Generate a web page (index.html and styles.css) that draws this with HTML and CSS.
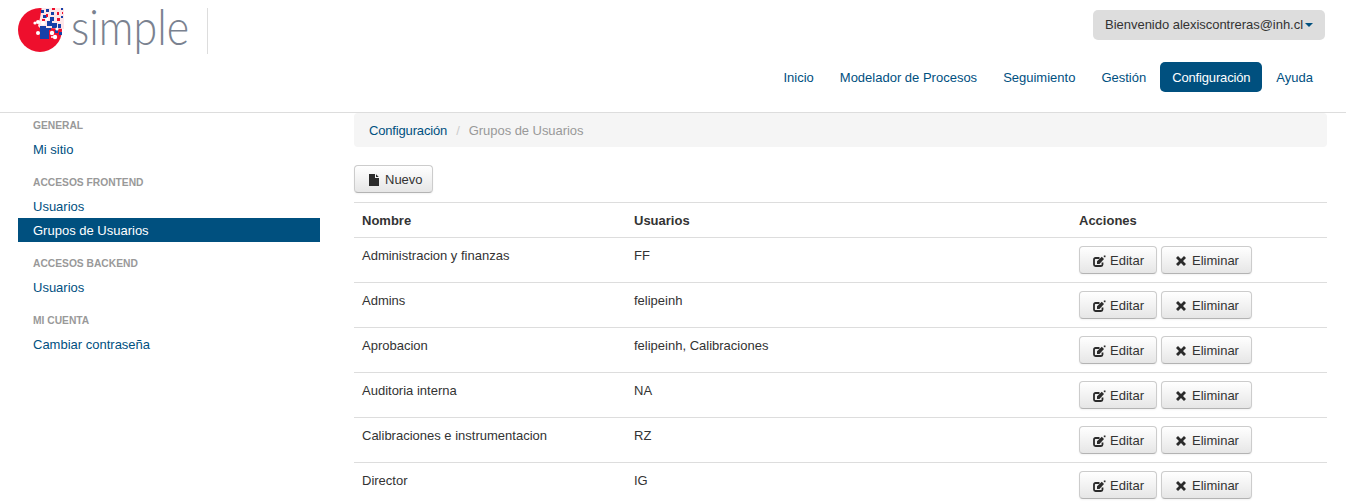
FILE: index.html
```html
<!DOCTYPE html>
<html lang="es">
<head>
<meta charset="utf-8">
<title>Grupos de Usuarios</title>
<link rel="stylesheet" href="styles.css">
</head>
<body>
<svg class="defs" width="0" height="0" aria-hidden="true">
  <symbol id="i-edit" viewBox="0 0 13 12">
    <path d="M6.500 3H2.500A1.500 1.500 0 0 0 1 4.500V9.500A1.500 1.500 0 0 0 2.500 11H8A1.500 1.500 0 0 0 9.500 9.500V7.500" fill="none" stroke="#2b2b2b" stroke-width="1.800"/>
    <path d="M4 9V6.300L8.800 1.800L11 4L6.500 9Z" fill="#2b2b2b"/>
    <rect x="10.800" y="0.500" width="1.700" height="1.700" fill="#2b2b2b"/>
  </symbol>
  <symbol id="i-x" viewBox="0 0 10 10">
    <path d="M2 0L5 3L8 0L10 2L7 5L10 8L8 10L5 7L2 10L0 8L3 5L0 2Z" fill="#2b2b2b"/>
  </symbol>
</svg>
<header class="header">
  <div class="brand">
    <svg class="logo-mark" width="46" height="46" viewBox="18 8 46 46" aria-hidden="true">
      <circle cx="40" cy="30" r="22" fill="#ee0f2d"/>
      <path d="M42 6 H66 V29 L50 28 L43 31 L38 26 L40 18 Z" fill="#fde6e9"/>
      <g fill="#1540a8">
        <rect x="40" y="30" width="9" height="9"/>
        <rect x="41" y="10" width="3" height="3"/><rect x="46" y="9" width="3" height="3"/>
        <rect x="51" y="12" width="3" height="3"/><rect x="61" y="8" width="2" height="2"/>
        <rect x="43" y="15" width="4" height="3"/><rect x="50" y="17" width="4" height="4"/>
        <rect x="47" y="21" width="5" height="5"/><rect x="52" y="23" width="5" height="5"/>
        <rect x="58" y="24" width="3" height="4"/><rect x="40" y="26" width="6" height="4"/>
        <rect x="59" y="32" width="3" height="3"/><rect x="61" y="16" width="2" height="2"/>
        <rect x="55" y="30" width="3" height="3"/><rect x="46" y="28" width="5" height="2"/>
      </g>
      <g fill="#ee0f2d">
        <rect x="52" y="8" width="3" height="2"/><rect x="57" y="12" width="2" height="3"/>
        <rect x="57" y="18" width="3" height="3"/><rect x="46" y="14" width="2" height="3"/>
        <rect x="42" y="19" width="3" height="2"/><rect x="62" y="12" width="1" height="2"/>
      </g>
      <g fill="#fff">
        <circle cx="35" cy="23" r="1.600"/><circle cx="38" cy="22" r="2"/><circle cx="43" cy="23" r="2"/>
        <circle cx="38" cy="33" r="2"/><circle cx="52" cy="33" r="2.200"/><circle cx="55" cy="37" r="2.200"/>
        <circle cx="57" cy="29" r="1.600"/><circle cx="47" cy="19" r="1.500"/><circle cx="52" cy="37" r="1"/>
      </g>
    </svg>
    <span class="logo-text">simple</span>
    <span class="logo-rule"></span>
  </div>
  <div class="header-right">
    <a class="user-btn" href="#">Bienvenido alexiscontreras@inh.cl<span class="caret"></span></a>
    <nav class="pills">
      <a class="pill" href="#">Inicio</a>
      <a class="pill" href="#">Modelador de Procesos</a>
      <a class="pill" href="#">Seguimiento</a>
      <a class="pill" href="#">Gestión</a>
      <a class="pill pill-active" href="#">Configuración</a>
      <a class="pill" href="#">Ayuda</a>
    </nav>
  </div>
</header>
<div class="layout">
  <aside class="sidebar">
    <div class="side-group">
      <div class="side-head">General</div>
      <a class="side-link" href="#">Mi sitio</a>
    </div>
    <div class="side-group">
      <div class="side-head">Accesos Frontend</div>
      <a class="side-link" href="#">Usuarios</a>
      <a class="side-link side-active" href="#">Grupos de Usuarios</a>
    </div>
    <div class="side-group">
      <div class="side-head">Accesos Backend</div>
      <a class="side-link" href="#">Usuarios</a>
    </div>
    <div class="side-group">
      <div class="side-head">Mi cuenta</div>
      <a class="side-link" href="#">Cambiar contraseña</a>
    </div>
  </aside>
  <main class="main">
    <div class="breadcrumb"><a class="crumb-link" href="#">Configuración</a><span class="sep">/</span><span class="current">Grupos de Usuarios</span></div>
    <a class="btn btn-new" href="#"><svg class="ico" width="10" height="12" viewBox="0 0 10 12" aria-hidden="true"><path d="M0 0H6V4H10V12H0Z M7 0.200 L9.800 3H7Z" fill="#2b2b2b"/></svg>Nuevo</a>
    <table class="grid">
      <colgroup><col class="col-a"><col class="col-b"><col></colgroup>
      <thead><tr><th>Nombre</th><th>Usuarios</th><th>Acciones</th></tr></thead>
      <tbody>
        <tr><td>Administracion y finanzas</td><td>FF</td><td class="acts"><a class="btn btn-edit" href="#"><svg class="ico-e" width="13" height="12" aria-hidden="true"><use href="#i-edit"/></svg>Editar</a><a class="btn btn-del" href="#"><svg class="ico-x" width="10" height="10" aria-hidden="true"><use href="#i-x"/></svg>Eliminar</a></td></tr>
        <tr><td>Admins</td><td>felipeinh</td><td class="acts"><a class="btn btn-edit" href="#"><svg class="ico-e" width="13" height="12" aria-hidden="true"><use href="#i-edit"/></svg>Editar</a><a class="btn btn-del" href="#"><svg class="ico-x" width="10" height="10" aria-hidden="true"><use href="#i-x"/></svg>Eliminar</a></td></tr>
        <tr><td>Aprobacion</td><td>felipeinh, Calibraciones</td><td class="acts"><a class="btn btn-edit" href="#"><svg class="ico-e" width="13" height="12" aria-hidden="true"><use href="#i-edit"/></svg>Editar</a><a class="btn btn-del" href="#"><svg class="ico-x" width="10" height="10" aria-hidden="true"><use href="#i-x"/></svg>Eliminar</a></td></tr>
        <tr><td>Auditoria interna</td><td>NA</td><td class="acts"><a class="btn btn-edit" href="#"><svg class="ico-e" width="13" height="12" aria-hidden="true"><use href="#i-edit"/></svg>Editar</a><a class="btn btn-del" href="#"><svg class="ico-x" width="10" height="10" aria-hidden="true"><use href="#i-x"/></svg>Eliminar</a></td></tr>
        <tr><td>Calibraciones e instrumentacion</td><td>RZ</td><td class="acts"><a class="btn btn-edit" href="#"><svg class="ico-e" width="13" height="12" aria-hidden="true"><use href="#i-edit"/></svg>Editar</a><a class="btn btn-del" href="#"><svg class="ico-x" width="10" height="10" aria-hidden="true"><use href="#i-x"/></svg>Eliminar</a></td></tr>
        <tr><td>Director</td><td>IG</td><td class="acts"><a class="btn btn-edit" href="#"><svg class="ico-e" width="13" height="12" aria-hidden="true"><use href="#i-edit"/></svg>Editar</a><a class="btn btn-del" href="#"><svg class="ico-x" width="10" height="10" aria-hidden="true"><use href="#i-x"/></svg>Eliminar</a></td></tr>
      </tbody>
    </table>
  </main>
</div>
</body>
</html>
```
FILE: styles.css
```css
html { overflow: hidden; height: 504px; }
body {
  margin: 0;
  font-family: "Liberation Sans", Arial, sans-serif;
  font-size: 13px;
  line-height: 20px;
  color: #333;
  background: #fff;
}
a { color: #00507f; text-decoration: none; }
.defs { display: block; height: 0; }

.header {
  height: 112px;
  border-bottom: 1px solid #ddd;
  display: flex;
  justify-content: space-between;
  padding: 0 21px 0 18px;
}
.brand { display: flex; align-items: flex-start; padding-top: 8px; }
.logo-mark { display: block; }
.logo-text {
  font-family: Lato, sans-serif;
  font-weight: 300;
  font-size: 43px;
  line-height: normal;
  color: #7a8290;
  margin: -11px 0 0 7px;
  width: 136px;
  transform: scaleY(1.14);
  transform-origin: top left;
}
.logo-rule { width: 1px; height: 46px; background: #ddd; }

.header-right { display: flex; flex-direction: column; align-items: flex-end; padding-top: 10px; }
.user-btn {
  display: flex;
  align-items: center;
  height: 30px;
  padding: 0 12px;
  background: #ddd;
  border-radius: 5px;
  color: #333;
  letter-spacing: -0.03px;
}
.caret {
  width: 0; height: 0;
  margin-left: 2px;
  border-left: 4px solid transparent;
  border-right: 4px solid transparent;
  border-top: 4px solid #00507f;
}
.pills { display: flex; gap: 2px; margin-top: 22px; }
.pill { display: block; height: 30px; line-height: 32px; padding: 0 12px; border-radius: 5px; }
.pill-active { background: #00507f; color: #fff; letter-spacing: -0.16px; }

.layout {
  display: grid;
  grid-template-columns: 302px 973px;
  column-gap: 34px;
  padding-left: 18px;
}
.side-group { margin-bottom: 9px; }
.side-head {
  height: 24px;
  line-height: 26px;
  padding-left: 15px;
  font-size: 10.25px;
  font-weight: bold;
  text-transform: uppercase;
  color: #999;
}
.side-link { display: block; height: 24px; line-height: 26px; padding-left: 15px; }
.side-active { background: #00507f; color: #fff; }

.breadcrumb {
  height: 34px;
  line-height: 36px;
  padding: 0 15px;
  background: #f5f5f5;
  border-radius: 4px;
  margin-bottom: 18px;
}
.crumb-link { letter-spacing: -0.16px; }
.sep { color: #ccc; padding: 0 9px; }
.current { color: #999; letter-spacing: -0.05px; }

.btn {
  display: inline-flex;
  align-items: center;
  box-sizing: border-box;
  height: 28px;
  padding-top: 2px;
  border: 1px solid #ccc;
  border-bottom-color: #b3b3b3;
  border-radius: 4px;
  background: linear-gradient(#fff, #e6e6e6);
  box-shadow: inset 0 1px 0 rgba(255,255,255,.2), 0 1px 2px rgba(0,0,0,.05);
  color: #333;
  vertical-align: top;
}
.btn-new { width: 79px; padding-left: 14px; }
.ico { margin-right: 6px; }
.btn-edit { width: 78px; padding-left: 13px; }
.ico-e { margin-right: 4px; }
.btn-del { width: 91px; padding-left: 14px; margin-left: 4px; }
.ico-x { margin-right: 6px; }

.grid {
  width: 100%;
  table-layout: fixed;
  border-collapse: separate;
  border-spacing: 0;
  margin-top: 9px;
}
.col-a { width: 272px; }
.col-b { width: 445px; }
.grid th, .grid td {
  text-align: left;
  vertical-align: top;
  border-top: 1px solid #ddd;
  padding: 8px 8px 0;
}
.grid th { height: 26px; font-weight: bold; }
.grid td { height: 36px; }
```
